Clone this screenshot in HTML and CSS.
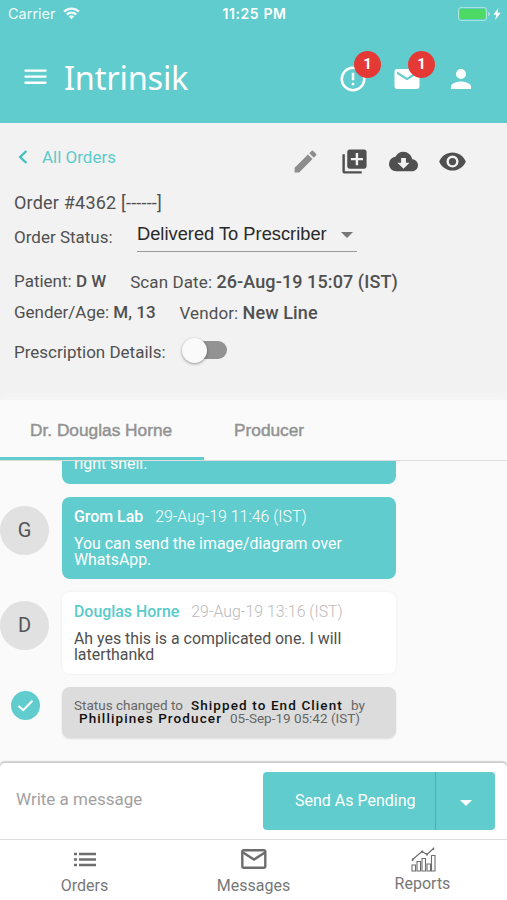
FILE: index.html
```html
<!DOCTYPE html>
<html lang="en">
<head>
<meta charset="utf-8">
<title>Intrinsik</title>
<link rel="stylesheet" href="styles.css">
</head>
<body>
<div class="app">
  <div class="statusbar">
    <div class="carrier"><span>Carrier</span>
      <svg class="wifi" viewBox="0 0 18 13"><path d="M9 12.7 6.2 9.8a4 4 0 0 1 5.6 0zM4.9 8.5 3.2 6.7a8.2 8.2 0 0 1 11.6 0l-1.7 1.8a5.8 5.8 0 0 0-8.2 0zM2 5.5.3 3.7a12.3 12.3 0 0 1 17.4 0L16 5.5a9.9 9.9 0 0 0-14 0z"/></svg>
    </div>
    <div class="clock">11:25 PM</div>
    <div class="power">
      <span class="battery"><span class="charge"></span></span><span class="cap"></span>
      <svg class="bolt" viewBox="0 0 8 12"><path d="M5.4 0 .3 6.800h3L2.200 12l5.500-7.200H4.500z"/></svg>
    </div>
  </div>
  <header class="appbar">
    <svg class="menu" viewBox="0 0 24 16"><path d="M1.5 1.400h21M1.500 7.700h21M1.500 14h21"/></svg>
    <h1 class="brand">Intrinsik</h1>
    <div class="actions">
      <div class="action"><svg class="icon" viewBox="0 0 24 24"><path d="M11 15h2v2h-2zm0-8h2v6h-2zm1-5a10 10 0 1 0 0 20 10 10 0 0 0 0-20zm0 18a8 8 0 1 1 0-16 8 8 0 0 1 0 16z"/></svg><span class="badge">1</span></div>
      <div class="action"><svg class="icon" viewBox="0 0 24 24"><path d="M20 4H4c-1.100 0-2 .9-2 2v12c0 1.100.9 2 2 2h16c1.100 0 2-.9 2-2V6c0-1.100-.9-2-2-2zm0 4-8 5-8-5V6l8 5 8-5v2z"/></svg><span class="badge">1</span></div>
      <div class="action"><svg class="icon" viewBox="0 0 24 24"><path d="M12 12a4 4 0 1 0 0-8 4 4 0 0 0 0 8zm0 2c-2.700 0-8 1.340-8 4v2h16v-2c0-2.660-5.300-4-8-4z"/></svg></div>
    </div>
  </header>

  <section class="order">
    <div class="toolbar">
      <a class="back"><svg viewBox="0 0 10 14"><path d="M8.400 1 2.200 7l6.200 6"/></svg><span>All Orders</span></a>
      <div class="tools">
        <svg class="icon muted" viewBox="0 0 24 24"><path d="M3 17.250V21h3.750L17.810 9.940l-3.750-3.750L3 17.250zM20.710 7.040a1 1 0 0 0 0-1.410l-2.340-2.340a1 1 0 0 0-1.410 0l-1.830 1.830 3.750 3.750 1.830-1.830z"/></svg>
        <svg class="icon" viewBox="0 0 24 24"><path d="M4 6H2v14c0 1.100.9 2 2 2h14v-2H4V6zm16-4H8c-1.100 0-2 .9-2 2v12c0 1.100.9 2 2 2h12c1.100 0 2-.9 2-2V4c0-1.100-.9-2-2-2zm-1 9h-4v4h-2v-4H9V9h4V5h2v4h4v2z"/></svg>
        <svg class="icon" viewBox="0 0 24 24"><path d="M19.350 10.040A7.490 7.490 0 0 0 12 4C9.110 4 6.600 5.640 5.350 8.040A5.994 5.994 0 0 0 0 14c0 3.310 2.690 6 6 6h13c2.760 0 5-2.240 5-5 0-2.640-2.050-4.780-4.650-4.960zM17 13l-5 5-5-5h3V9h4v4h3z"/></svg>
        <svg class="icon" viewBox="0 0 24 24"><path d="M12 4.500C7 4.500 2.730 7.610 1 12c1.730 4.390 6 7.500 11 7.500s9.270-3.110 11-7.500c-1.730-4.390-6-7.500-11-7.500zM12 17a5 5 0 1 1 0-10 5 5 0 0 1 0 10zm0-8a3 3 0 1 0 0 6 3 3 0 0 0 0-6z"/></svg>
      </div>
    </div>
    <div class="number">Order #4362 [------]</div>
    <div class="status"><span class="label">Order Status:</span>
      <div class="select"><span>Delivered To Prescriber</span><i class="caret"></i></div>
    </div>
    <div class="facts first"><span class="patient">Patient: <b>D W</b></span><span class="wide">Scan Date: <b>26-Aug-19 15:07 (IST)</b></span></div>
    <div class="facts"><span class="gender">Gender/Age: <b>M, 13</b></span><span class="wide">Vendor: <b>New Line</b></span></div>
    <div class="details"><span>Prescription Details:</span><span class="switch"><span class="knob"></span></span></div>
  </section>

  <nav class="tabs">
    <div class="tab active">Dr. Douglas Horne</div>
    <div class="tab">Producer</div>
  </nav>

  <main class="chat">
    <div class="row">
      <div class="side"></div>
      <div class="bubble mine clipped"><p>right shell.</p></div>
    </div>
    <div class="row">
      <div class="side"><span class="avatar">G</span></div>
      <div class="bubble mine"><div class="meta"><b class="grom">Grom Lab</b><time>29-Aug-19 11:46 (IST)</time></div><p class="sent">You can send the image/diagram over<br>WhatsApp.</p></div>
    </div>
    <div class="row">
      <div class="side"><span class="avatar">D</span></div>
      <div class="bubble theirs"><div class="meta"><b>Douglas Horne</b><time>29-Aug-19 13:16 (IST)</time></div><p>Ah yes this is a complicated one. I will<br>laterthankd</p></div>
    </div>
    <div class="row event-row">
      <div class="side"><span class="check"><svg viewBox="0 0 18 14"><path d="M1.500 7.500 6.500 12 16.500 1.800"/></svg></span></div>
      <div class="bubble event"><div><span>Status changed to</span><b>Shipped to End Client</b><span>by</span></div><div class="second"><b>Phillipines Producer</b><span>05-Sep-19 05:42 (IST)</span></div></div>
    </div>
  </main>

  <div class="composer">
    <span class="placeholder">Write a message</span>
    <div class="send"><span class="send-label">Send As Pending</span><span class="send-more"><i class="caret light"></i></span></div>
  </div>

  <nav class="bottom">
    <a class="item"><svg class="list" viewBox="0 0 24 16"><path d="M1 2h3M1 7.500h3M1 13h3M6 2h17M6 7.500h17M6 13h17"/></svg><span>Orders</span></a>
    <a class="item"><svg class="mail" viewBox="0 0 26 20"><rect x="1.300" y="1.300" width="23" height="17.400" rx="1.500"/><path d="M2 3.500 13 10.500 24 3.500"/></svg><span>Messages</span></a>
    <a class="item reports"><svg class="chart" viewBox="0 0 26 25"><path d="M2 18h3.500v6H2zM7 14.500h3.500V24H7zM12 11.500h3.500V24H12zM17 17h3.500v7H17zM21.500 8.500H25V24h-3.500z"/><path d="M2.500 12.500 12 4.500l5 3L23.500 1.500"/><path class="dots" d="M1.800 12.700h1.600M11.500 4.700h1.600M16.200 7.300h1.600M22.800 1.800h1.400"/></svg><span>Reports</span></a>
  </nav>
</div>
</body>
</html>
```

FILE: styles.css
```css
* { box-sizing: border-box; }
body { margin: 0; font-family: Roboto, "Liberation Sans", sans-serif; color: #505050; background: #fafafa; }
h1, p { margin: 0; }
svg { display: block; flex: none; }
span, b, time { white-space: nowrap; }
.app { width: 507px; height: 900px; display: flex; flex-direction: column; overflow: hidden; }

.statusbar { height: 28px; background: #60cccd; color: #fff; display: grid; grid-template-columns: 1fr auto 1fr; align-items: center; padding: 0 6px 0 8px; font-family: Inter, sans-serif; font-size: 14.500px; }
.carrier { display: flex; align-items: center; gap: 7px; opacity: .9; margin-top: -2px; }
.wifi { width: 17px; height: 13px; fill: #fff; }
.clock { font-weight: 600; font-size: 14px; letter-spacing: .6px; margin-top: -2px; }
.power { display: flex; align-items: center; justify-content: flex-end; margin-top: -1px; }
.battery { width: 29px; height: 14px; border: 1px solid #a9e5dc; border-radius: 3px; padding: 1px; }
.charge { display: block; height: 10px; background: #4cd964; border-radius: 1px; }
.cap { width: 2px; height: 4px; margin-left: 1px; background: #a9e5dc; border-radius: 0 2px 2px 0; }
.bolt { width: 8px; height: 12px; margin-left: 3px; fill: #fff; }

.appbar { height: 95px; background: #60cccd; color: #fff; display: flex; align-items: center; padding: 2px 31px 0 24px; }
.menu { width: 23px; height: 16px; stroke: #fff; stroke-width: 2.400; stroke-linecap: round; }
.brand { font: 400 32.500px/40px "Noto Sans", sans-serif; margin: 2px 0 0 17px; letter-spacing: -.2px; }
.actions { margin-left: auto; display: flex; gap: 24px; padding-top: 5px; }
.action { position: relative; }
.icon { width: 30px; height: 30px; fill: currentColor; }
.badge { position: absolute; left: 16px; top: -13px; width: 27px; height: 27px; border-radius: 50%; background: #e53935; font-size: 15px; font-weight: 700; line-height: 27px; text-align: center; }

.order { height: 277px; background: #f2f2f2; padding: 19px 14px 0; }
.toolbar { height: 40px; display: flex; justify-content: space-between; }
.back { display: flex; align-items: center; height: 30px; padding-left: 4px; gap: 14px; color: #5ecacb; font-size: 17px; }
.back svg { width: 10px; height: 14px; fill: none; stroke: #43bfc0; stroke-width: 2.400; }
.tools { display: flex; gap: 20px; padding: 5px 26px 0 0; }
.tools .icon { width: 29px; height: 29px; }
.muted { color: #8d8d8d; }
.number { font-size: 18px; line-height: 41px; height: 41px; letter-spacing: .2px; }
.status { display: flex; height: 34px; }
.label { width: 123px; padding-top: 4px; font-size: 17px; line-height: 20px; }
.select { width: 220px; height: 29px; border-bottom: 1.500px solid #999; display: flex; justify-content: space-between; padding-right: 4px; color: #292929; font: 18.300px/22px "Liberation Sans", sans-serif; }
.caret { width: 0; height: 0; margin-top: 9px; border: 6.500px solid transparent; border-bottom: 0; border-top: 6px solid #777; }
.facts { display: flex; gap: 24px; height: 31px; line-height: 30px; font-size: 17px; }
.facts.first { height: 31px; margin-top: 9px; }
.facts b { font-weight: 500; }
.wide { padding-top: 1px; letter-spacing: .1px; }
.facts .wide b { font-size: 18px; }
.details { display: flex; align-items: center; gap: 18px; height: 40px; margin-top: 4px; font-size: 17px; }
.switch { position: relative; width: 43px; height: 18px; margin-top: -5px; border-radius: 10px; background: #929292; }
.knob { position: absolute; left: -2px; top: -3px; width: 25px; height: 25px; border-radius: 50%; background: #fafafa; box-shadow: 0 1px 3px rgba(0,0,0,.4); }

.tabs { height: 61px; flex: none; display: flex; background: #fafafa; border-bottom: 1px solid #ddd; box-shadow: 0 -3px 5px #f6f6f6; }
.tab { height: 60px; padding: 0 29px 0 30px; font: 17.300px/60px "Liberation Sans", sans-serif; color: #929292; white-space: nowrap; -webkit-text-stroke: .45px #929292; }
.tab.active { width: 204px; border-bottom: 3px solid #60cccd; }

.chat { height: 302px; display: flex; flex-direction: column; gap: 12.500px; overflow: hidden; }
.row { display: flex; align-items: center; }
.side { width: 62px; flex: none; }
.avatar { display: flex; width: 49px; height: 49px; margin-top: -15px; border-radius: 50%; background: #e1e1e1; align-items: center; justify-content: center; font-size: 20px; color: #555; }
.bubble { width: 334px; height: 82.500px; border-radius: 8px; padding: 10px 12px; font-size: 15.900px; line-height: 16px; }
.mine { background: #60cccd; color: #fff; }
.clipped { height: 23px; border-radius: 0 0 8px 8px; padding-top: 0; }
.clipped p { margin-top: -5px; }
.meta { display: flex; gap: 12px; line-height: 20px; margin-bottom: 9px; }
.meta b { font-weight: 500; }
.meta time { font-weight: 300; }
.theirs { background: #fff; box-shadow: 0 0 3px rgba(0,0,0,.06); }
.theirs .meta b { color: #5acaca; }
.theirs time { color: #bbb; }
.event { height: 51.500px; background: #dcdcdc; box-shadow: 0 1px 2px rgba(0,0,0,.12); padding: 12px; font-size: 13.500px; line-height: 13px; color: #666; }
.event div { display: flex; gap: 8px; }
.event .second { padding-left: 5px; }
.event b { font-weight: 500; letter-spacing: 1.100px; color: #111; }
.check { display: flex; width: 29px; height: 29px; margin: -14px 0 0 11px; border-radius: 50%; background: #60cccd; align-items: center; justify-content: center; }
.check svg { width: 17px; height: 13px; fill: none; stroke: #fff; stroke-width: 2.200; }

.composer { height: 76px; flex: none; display: flex; align-items: center; justify-content: space-between; padding: 0 12px 0 16px; background: #fff; border-radius: 5px 5px 0 0; box-shadow: 0 -2px 1px -.5px #d0d0d0; }
.placeholder { color: #a1a1a1; font-size: 17px; margin-top: -4px; }
.send { display: flex; width: 232px; height: 58px; background: #60cccd; border-radius: 4px; color: #fff; }
.send-label { width: 173px; padding-left: 32px; line-height: 58px; font-size: 16px; border-right: 1px solid #4eaeb0; }
.send-more { flex: 1; display: flex; justify-content: center; align-items: center; }
.caret.light { margin: 4px 0 0; border-top-color: #fff; }

.bottom { height: 61px; flex: none; display: grid; grid-template-columns: repeat(3, 1fr); background: #fff; border-top: 1px solid #ddd; }
.item { display: flex; flex-direction: column; align-items: center; height: 60px; font-size: 16px; line-height: 20px; color: #777; }
.item span { margin-top: auto; margin-bottom: 4px; }
.item.reports span { margin-bottom: 6px; }
.item svg { fill: none; stroke: #6d6d6d; }
.list { width: 24px; height: 16px; margin-top: 12px; stroke-width: 2.300; }
.mail { width: 26px; height: 20px; margin-top: 9px; stroke-width: 2.400; }
.chart { width: 26px; height: 25px; margin-top: 7px; stroke-width: 1.100; }
.chart .dots { stroke-width: 2.500; }
```
